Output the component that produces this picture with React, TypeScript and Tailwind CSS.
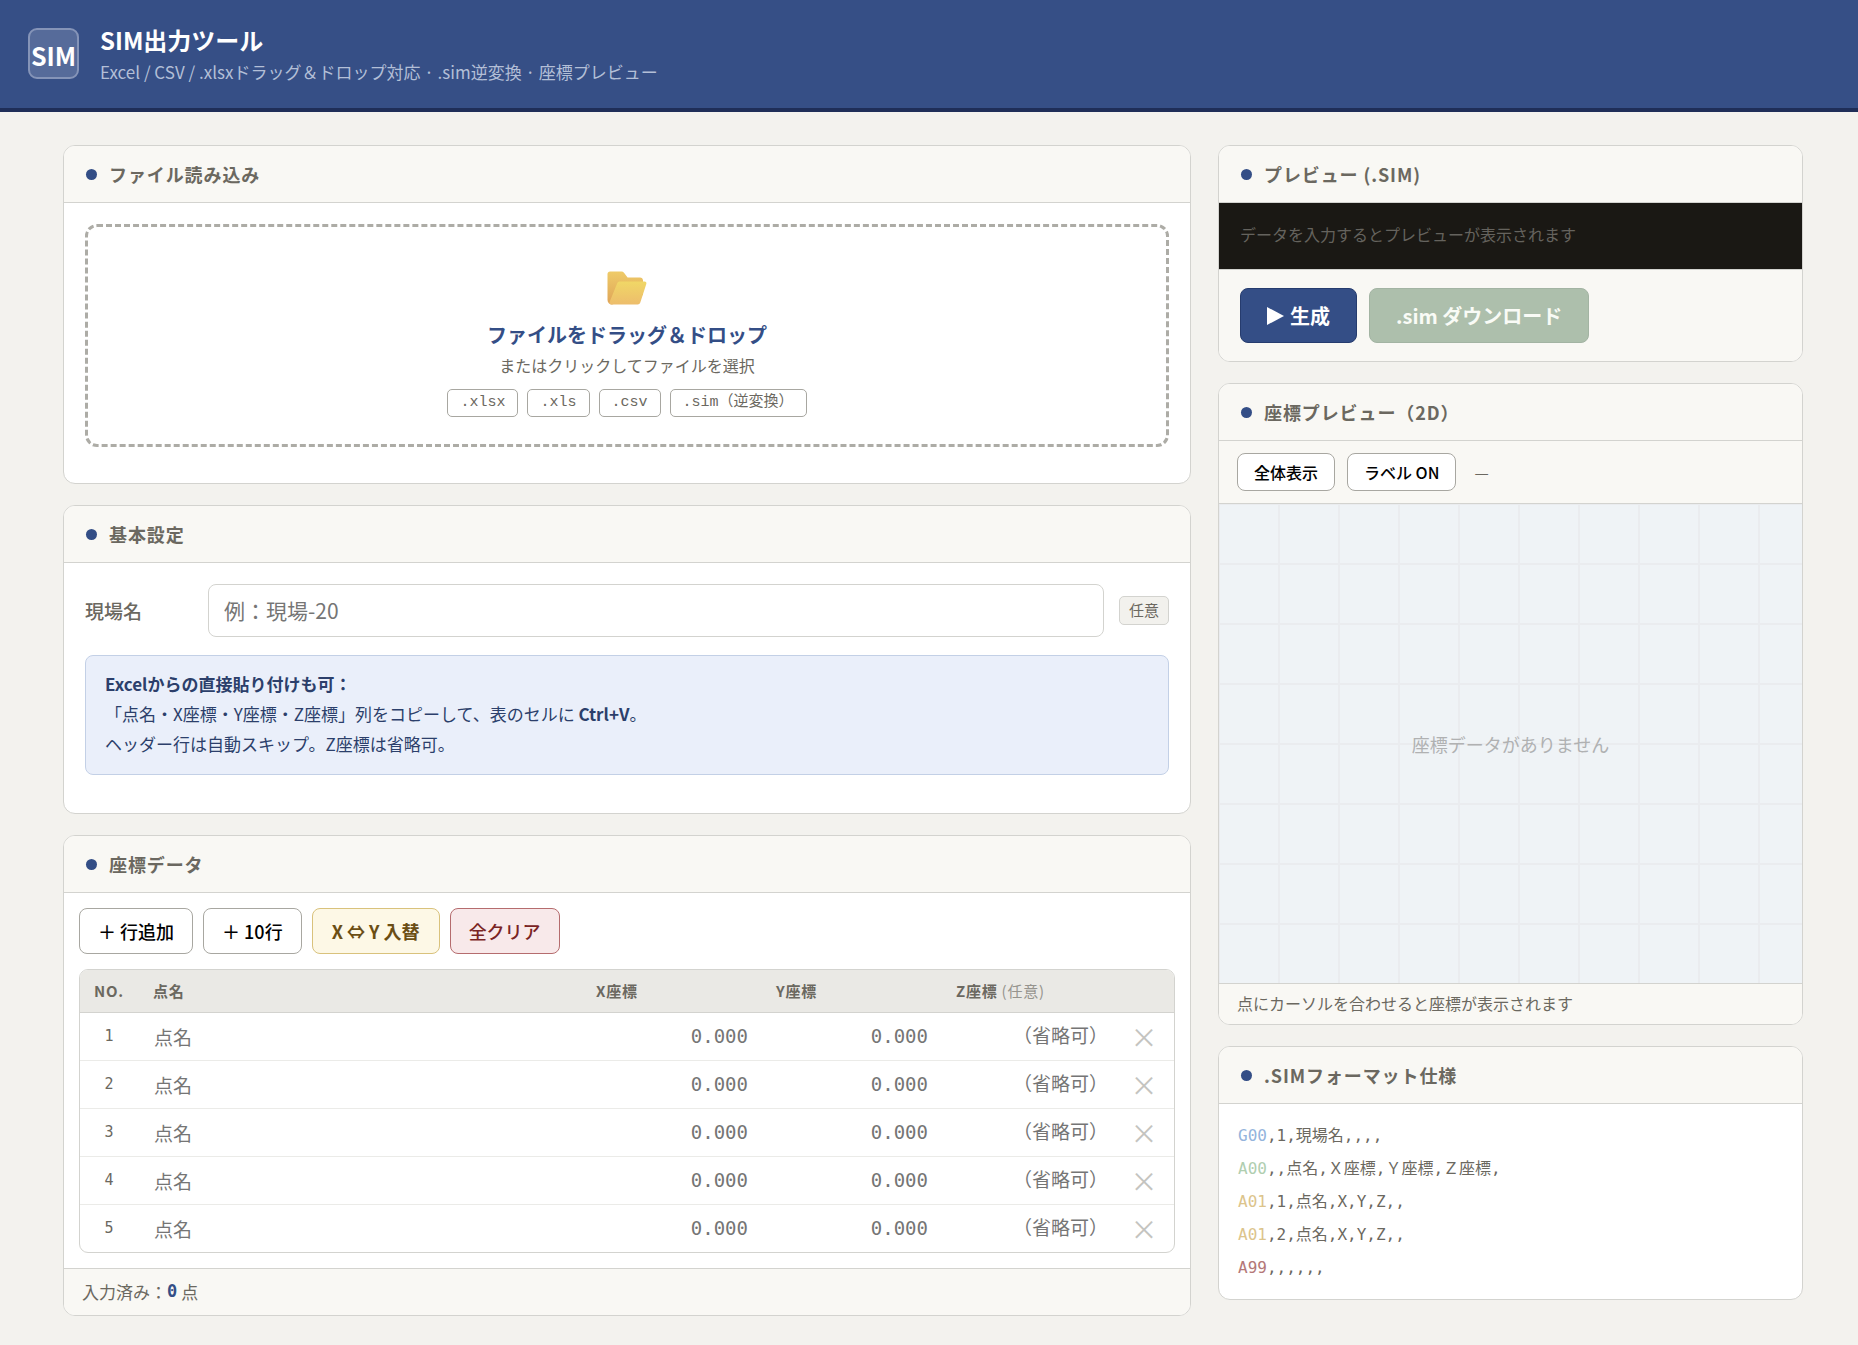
import { useState } from "react";
import type { ReactNode } from "react";

const rows = [1, 2, 3, 4, 5];
const fileTypes = [".xlsx", ".xls", ".csv", ".sim（逆変換）"];

const specLines = [
  { code: "G00", rest: ",1,現場名,,,,", color: "text-[#94b4dc]" },
  { code: "A00", rest: ",,点名,Ｘ座標,Ｙ座標,Ｚ座標,", color: "text-[#b0ceb0]" },
  { code: "A01", rest: ",1,点名,X,Y,Z,,", color: "text-[#dcc48c]" },
  { code: "A01", rest: ",2,点名,X,Y,Z,,", color: "text-[#dcc48c]" },
  { code: "A99", rest: ",,,,,,", color: "text-[#b47878]" },
];

function Card({ title, children }: { title: string; children: ReactNode }) {
  return (
    <section className="overflow-hidden rounded-xl border border-[#d3d3cf] bg-white">
      <h2 className="flex h-[57px] items-center gap-3 border-b border-[#d3d3cf] bg-[#f9f8f4] px-[22px] text-lg font-bold tracking-wider text-[#6b6860]">
        <span className="size-[11px] rounded-full bg-[#344e86]" />
        {title}
      </h2>
      {children}
    </section>
  );
}

function FolderIcon() {
  return (
    <svg width="40" height="34" viewBox="0 0 40 34" aria-hidden="true">
      <defs>
        <linearGradient id="folderBack" x1="0" y1="0" x2="0" y2="1">
          <stop offset="0" stopColor="#efcb68" />
          <stop offset="1" stopColor="#dfa458" />
        </linearGradient>
        <linearGradient id="folderFront" x1="0" y1="0" x2="0" y2="1">
          <stop offset="0" stopColor="#f0d766" />
          <stop offset="1" stopColor="#edbd6c" />
        </linearGradient>
      </defs>
      <path
        d="M3 0.5h11.5c1 0 1.9.4 2.5 1.2l3.6 4.8h12.400c1.700 0 3 1.300 3 3V24L5 33.500C2.500 33.500.5 31.500.5 29V3C.5 1.600 1.600.5 3 .5Z"
        fill="url(#folderBack)"
      />
      <path
        d="M13 10.500h24.500c1.500 0 2.300 1.100 1.800 2.500l-6 18.500c-.5 1.300-1.300 2-2.600 2H4.500c-1.600 0-2.400-1.200-1.800-2.700l7.500-18.500c.5-1.200 1.500-1.800 2.800-1.800Z"
        fill="url(#folderFront)"
      />
    </svg>
  );
}

export default function App() {
  const [labels, setLabels] = useState(true);
  const cellInput =
    "block h-[47px] w-full bg-transparent pr-[6px] text-right font-['DejaVu_Sans_Mono','Noto_Sans_CJK_JP',monospace] text-[19px] placeholder:text-[#757575] outline-none";

  return (
    <div className="min-h-screen bg-[#f3f2ee] pb-7 font-['Noto_Sans_CJK_JP',sans-serif] text-black">
      <header className="flex h-28 items-start gap-[21px] border-b-4 border-[#1f2e58] bg-[#364f86] px-7 pt-7">
        <div className="flex size-[51px] shrink-0 items-center justify-center rounded-[9px] border-2 border-[#8594b8] bg-[#566b9a] pt-1 text-[25px] font-bold text-white">
          SIM
        </div>
        <div className="-mt-1">
          <h1 className="text-2xl leading-8 font-bold text-white">SIM出力ツール</h1>
          <p className="text-[17px] leading-8 text-[#b3bfd7]">
            Excel / CSV / .xlsxドラッグ＆ドロップ対応 · .sim逆変換 · 座標プレビュー
          </p>
        </div>
      </header>

      <main className="grid grid-cols-[minmax(0,1fr)_585px] items-start gap-[27px] pt-[33px] pr-[55px] pl-[63px]">
        <div className="flex flex-col gap-[21px]">
          <Card title="ファイル読み込み">
            <div className="px-[21px] pt-[21px] pb-9">
              <button
                type="button"
                className="flex w-full flex-col items-center rounded-xl border-3 border-dashed border-[#adaca6] pt-11 pb-[27px]"
              >
                <FolderIcon />
                <span className="mt-4 text-xl leading-7 font-bold text-[#344e86]">
                  ファイルをドラッグ＆ドロップ
                </span>
                <span className="mt-0.5 text-base leading-7 text-[#6b6860]">
                  またはクリックしてファイルを選択
                </span>
                <span className="mt-2.5 flex gap-[9px]">
                  {fileTypes.map((t) => (
                    <span
                      key={t}
                      className="flex h-7 items-center rounded-[5px] border border-[#a8a7a1] bg-white px-3 font-['Liberation_Mono','Noto_Sans_CJK_JP',monospace] text-[15px] text-[#6b6860]"
                    >
                      {t}
                    </span>
                  ))}
                </span>
              </button>
            </div>
          </Card>

          <Card title="基本設定">
            <div className="px-[21px] pt-[21px] pb-[38px]">
              <div className="flex items-center gap-[15px]">
                <label htmlFor="site" className="w-[108px] shrink-0 pt-0.5 text-[19px] font-medium text-[#6b6860]">
                  現場名
                </label>
                <input
                  id="site"
                  placeholder="例：現場-20"
                  className="h-[53px] min-w-0 flex-1 rounded-lg border border-[#d3d3cf] bg-white px-[15px] pb-0.5 text-[21px] outline-none placeholder:text-[#757575]"
                />
                <span className="flex h-[29px] items-center rounded-[5px] border border-[#d3d3cf] bg-[#f2f1ed] px-[9px] text-[15px] text-[#6b6860]">
                  任意
                </span>
              </div>
              <div className="mt-[18px] rounded-lg border border-[#c3d0e6] bg-[#eaeffa] px-[19px] pt-[13px] pb-[15px] text-[17px] leading-[30px] text-[#2c3f6b]">
                <strong>Excelからの直接貼り付けも可：</strong>
                <p>
                  「点名・X座標・Y座標・Z座標」列をコピーして、表のセルに <strong>Ctrl+V</strong>。
                </p>
                <p>ヘッダー行は自動スキップ。Z座標は省略可。</p>
              </div>
            </div>
          </Card>

          <Card title="座標データ">
            <div className="p-[15px]">
              <div className="flex gap-[10px] text-lg">
                <button type="button" className="h-[46px] rounded-lg border border-[#a8a7a1] bg-white px-[18px] font-medium">
                  ＋ 行追加
                </button>
                <button type="button" className="h-[46px] rounded-lg border border-[#a8a7a1] bg-white px-[18px] font-medium">
                  ＋ 10行
                </button>
                <button type="button" className="h-[46px] rounded-lg border border-[#d9c27c] bg-[#fdf8e6] px-[19px] font-bold text-[#6b4e14]">
                  X ⇔ Y 入替
                </button>
                <button type="button" className="h-[46px] rounded-lg border border-[#b56c6e] bg-[#f8e9ea] px-[18px] font-medium text-[#7a2424]">
                  全クリア
                </button>
              </div>
              <div className="mt-[15px] overflow-hidden rounded-[9px] border border-[#d3d3cf]">
                <table className="w-full table-fixed border-collapse">
                  <colgroup>
                    <col className="w-[58px]" />
                    <col />
                    <col className="w-[180px]" />
                    <col className="w-[180px]" />
                    <col className="w-[180px]" />
                    <col className="w-[60px]" />
                  </colgroup>
                  <thead>
                    <tr className="h-[42px] border-b border-[#d3d3cf] bg-[#eae9e5] text-left text-[15px] tracking-wider text-[#6b6860]">
                      <th className="text-center">NO.</th>
                      <th className="pl-[15px]">点名</th>
                      <th className="pl-[22px]">X座標</th>
                      <th className="pl-[22px]">Y座標</th>
                      <th className="pl-[22px]">
                        Z座標 <span className="font-normal text-[#96948e]">(任意)</span>
                      </th>
                      <th />
                    </tr>
                  </thead>
                  <tbody>
                    {rows.map((n) => (
                      <tr key={n} className="border-b border-[#ebebe8] last:border-b-0">
                        <td className="text-center font-['DejaVu_Sans_Mono',monospace] text-[15px] text-[#6b6860]">{n}</td>
                        <td>
                          <input
                            aria-label={`点名 ${n}`}
                            placeholder="点名"
                            className="block h-[47px] w-full bg-transparent pl-4 text-[19px] outline-none placeholder:text-[#757575]"
                          />
                        </td>
                        <td>
                          <input aria-label={`X座標 ${n}`} placeholder="0.000" className={cellInput} />
                        </td>
                        <td>
                          <input aria-label={`Y座標 ${n}`} placeholder="0.000" className={cellInput} />
                        </td>
                        <td>
                          <input aria-label={`Z座標 ${n}`} placeholder="（省略可）" className={cellInput} />
                        </td>
                        <td className="text-center">
                          <button type="button" aria-label={`${n}行目を削除`} className="block h-[47px] w-full text-[27px] leading-[47px] text-[#c4c4c0]">
                            ×
                          </button>
                        </td>
                      </tr>
                    ))}
                  </tbody>
                </table>
              </div>
            </div>
            <footer className="flex h-[47px] items-center border-t border-[#d3d3cf] bg-[#f9f8f4] px-[18px] text-[17px] text-[#6b6860]">
              入力済み：
              <strong className="font-['DejaVu_Sans_Mono',monospace] text-[#344e86]">0</strong>
              <span className="ml-1">点</span>
            </footer>
          </Card>
        </div>

        <div className="flex flex-col gap-[21px]">
          <Card title="プレビュー (.SIM)">
            <div className="bg-[#1a1814] px-[21px] pt-4 pb-5 text-base leading-[30px] text-[#65635e]">
              データを入力するとプレビューが表示されます
            </div>
            <div className="flex gap-3 border-t border-[#d3d3cf] bg-[#f9f8f4] px-[21px] py-[18px] text-xl font-bold text-white">
              <button type="button" className="flex h-[55px] items-center gap-[6px] rounded-lg border border-[#263c6e] bg-[#344e86] px-[26px]">
                <svg width="17" height="18" viewBox="0 0 17 18" fill="currentColor" aria-hidden="true">
                  <path d="M0 0v18l17-9Z" />
                </svg>
                生成
              </button>
              <button type="button" disabled className="h-[55px] rounded-lg border border-[#a3b4a3] bg-[#adbfac] px-[26px] text-[#f9fbf6]">
                .sim ダウンロード
              </button>
            </div>
          </Card>

          <Card title="座標プレビュー（2D）">
            <div className="flex items-center gap-3 border-b border-[#d3d3cf] bg-[#f9f8f4] px-[18px] py-3 text-base">
              <button type="button" className="h-[38px] rounded-lg border border-[#a8a7a1] bg-white px-4 font-medium">
                全体表示
              </button>
              <button
                type="button"
                onClick={() => setLabels(!labels)}
                className="h-[38px] rounded-lg border border-[#a8a7a1] bg-white px-4 font-medium"
              >
                {labels ? "ラベル ON" : "ラベル OFF"}
              </button>
              <span className="ml-[6px] text-[#6b6860]">—</span>
            </div>
            <div className="flex h-[479px] items-center justify-center bg-[#eff3f6] bg-[linear-gradient(to_right,transparent_58px,#eaecef_58px),linear-gradient(to_bottom,transparent_58px,#eaecef_58px)] bg-[size:60px_60px] bg-[position:1px_1px] text-lg text-[#b0b1b2]">
              座標データがありません
            </div>
            <p className="border-t border-[#d3d3cf] bg-[#f9f8f4] px-[18px] pb-0.5 text-base leading-[38px] text-[#6b6860]">
              点にカーソルを合わせると座標が表示されます
            </p>
          </Card>

          <Card title=".SIMフォーマット仕様">
            <div className="px-[19px] py-[15px] font-['DejaVu_Sans_Mono','Noto_Sans_CJK_JP',monospace] text-base leading-[33px] text-[#6b6860]">
              {specLines.map((l, i) => (
                <p key={i} className="h-[33px]">
                  <span className={l.color}>{l.code}</span>
                  {l.rest}
                </p>
              ))}
            </div>
          </Card>
        </div>
      </main>
    </div>
  );
}
